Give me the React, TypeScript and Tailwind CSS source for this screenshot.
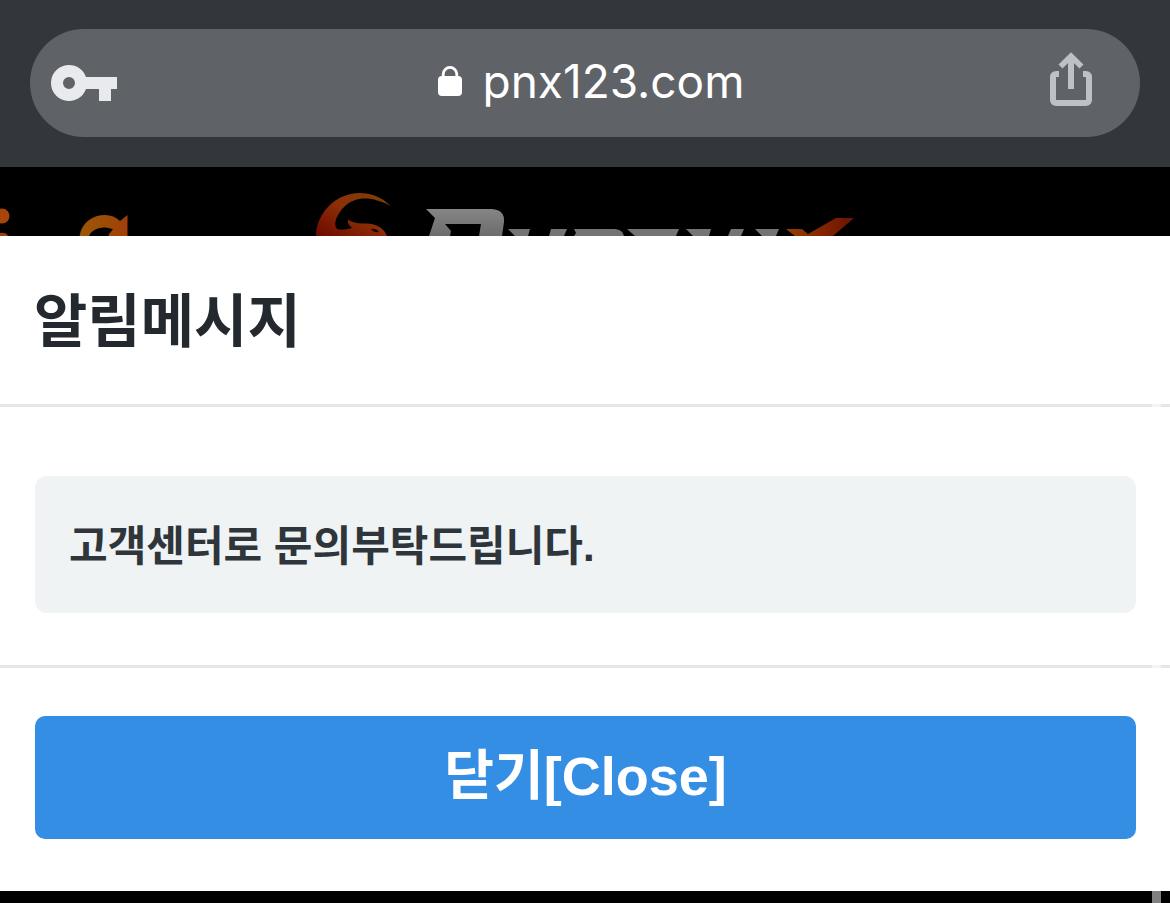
function KeyIcon() {
  return (
    <svg width="66" height="36" viewBox="0 0 66 36" fill="#e8eaed" aria-hidden="true">
      <path
        fillRule="evenodd"
        d="M18 0a18 18 0 0 1 17 12h31v12h-6v12H48V24H35A18 18 0 1 1 18 0Zm0 12a6 6 0 1 0 0 12 6 6 0 0 0 0-12Z"
      />
    </svg>
  );
}

function LockIcon() {
  return (
    <svg width="24" height="30" viewBox="0 0 24 30" aria-hidden="true">
      <path d="M5.2 12V8.2a6.8 6.8 0 0 1 13.6 0V12" fill="none" stroke="#fff" strokeWidth="2.8" />
      <rect y="10" width="24" height="20" rx="4" fill="#fff" />
    </svg>
  );
}

function ShareIcon() {
  return (
    <svg width="42" height="54" viewBox="0 0 42 54" fill="none" stroke="#bdc1c6" strokeWidth="6" aria-hidden="true">
      <path d="M9 22H6.500Q3 22 3 25.500V47.500Q3 51 6.500 51H35.500Q39 51 39 47.500V25.500Q39 22 35.500 22H33" />
      <path d="M21 37V5" />
      <path d="M10.500 14.500 21 4.200 31.500 14.500" strokeWidth="5.600" />
    </svg>
  );
}

function SiteBanner() {
  return (
    <svg className="block h-[69px] w-full" viewBox="0 0 1170 69" preserveAspectRatio="xMidYMin slice" aria-hidden="true">
      <defs>
        <linearGradient id="flame" x1="0" y1="1" x2="1" y2="0">
          <stop offset="0" stopColor="#6d0800" />
          <stop offset="0.5" stopColor="#8c2e06" />
          <stop offset="1" stopColor="#7c4208" />
        </linearGradient>
        <linearGradient id="amber" x1="0" y1="0" x2="1" y2="0">
          <stop offset="0" stopColor="#9b5706" />
          <stop offset="1" stopColor="#a04008" />
        </linearGradient>
        <linearGradient id="ember" x1="0" y1="0" x2="1" y2="0">
          <stop offset="0" stopColor="#954000" />
          <stop offset="0.4" stopColor="#8a2a00" />
          <stop offset="1" stopColor="#6c1200" />
        </linearGradient>
        <linearGradient id="steel" x1="0" y1="0" x2="0" y2="1">
          <stop offset="0" stopColor="#858585" />
          <stop offset="1" stopColor="#6c6c6c" />
        </linearGradient>
      </defs>
      <circle cx="2" cy="49" r="7.500" fill="#a84508" />
      <path d="M0 66Q6 65 8 69H0Z" fill="#a04008" />
      <path
        d="M79.500 69C82 55 93 48 105 48Q114 48 120 54L127.500 48V69H109Q108 67 110 66L113 62C101 58 92 62 89 69Z"
        fill="url(#amber)"
      />
      <path
        d="M316 69C316 48 334 26 360 26Q378 26 391 39C372 29 356 29 345 39C336 48 333 57 337 62Q343 64 352 61Q347 57 348 52.500Q354 57 365 56.500C376 56 384 61 387 69Z"
        fill="url(#flame)"
      />
      <path d="M371 62Q376 61 379 65Q374 66 371 62Z" fill="#1c0500" />
      <path
        fillRule="evenodd"
        d="M426 42H492Q505 43 504 55L502 69H429L435 51ZM445 57 451 64 450 69H479L481 57Z"
        fill="url(#steel)"
      />
      <path
        d="M508 62H530L528 69H515ZM551 62H567L564 69H549ZM574 62H615Q623 63 624 69H574L576 66ZM627 62H679L676 69H635ZM686 62H711L709 69H693ZM731 62H744L741 69H728ZM755 62H779L776 69H762Z"
        fill="#747474"
      />
      <path d="M786 62H802L808 67 836 51H854L833 69H795Z" fill="url(#ember)" />
    </svg>
  );
}

export default function App() {
  return (
    <div className="relative min-h-screen bg-black font-['Liberation_Sans','Noto_Sans_CJK_KR',sans-serif]">
      <header className="bg-[#33363b] px-[30px] pt-[29px] pb-[30px]">
        <div className="flex h-[108px] items-center justify-between rounded-[54px] bg-[#5f6267] pr-12 pl-[21px]">
          <button type="button" aria-label="Passwords">
            <KeyIcon />
          </button>
          <a
            href="#site"
            className="flex items-center gap-5 pb-1 pl-4 font-['Inter',sans-serif] text-[46px] leading-[56px] text-white"
          >
            <LockIcon />
            <span>pnx123.com</span>
          </a>
          <button type="button" aria-label="Share" className="pb-2">
            <ShareIcon />
          </button>
        </div>
      </header>

      <SiteBanner />

      <section role="dialog" aria-labelledby="notice-title" className="bg-white">
        <div className="border-b-[3px] border-[#e4e7e9] px-[34px] pt-11 pb-10">
          <h1 id="notice-title" className="text-[58px] leading-[84px] font-bold text-[#23292e]">
            알림메시지
          </h1>
        </div>
        <div className="border-b-[3px] border-[#e4e7e9] pt-[69px] pr-[34px] pb-[52px] pl-[35px]">
          <p className="rounded-xl bg-[#eff3f4] px-[34px] pt-[38px] pb-[34px] text-[42px] leading-[65px] font-bold text-[#2e353b]">
            고객센터로 문의부탁드립니다.
          </p>
        </div>
        <div className="pt-12 pr-[34px] pb-[52px] pl-[35px]">
          <button
            type="button"
            className="h-[123px] w-full rounded-[10px] bg-[#348ee4] pb-1 text-[54px] leading-[80px] font-bold text-white"
          >
            닫기[Close]
          </button>
        </div>
      </section>

      <div className="absolute top-[236px] right-[9px] bottom-0 w-[9px] bg-white/50" />
    </div>
  );
}
